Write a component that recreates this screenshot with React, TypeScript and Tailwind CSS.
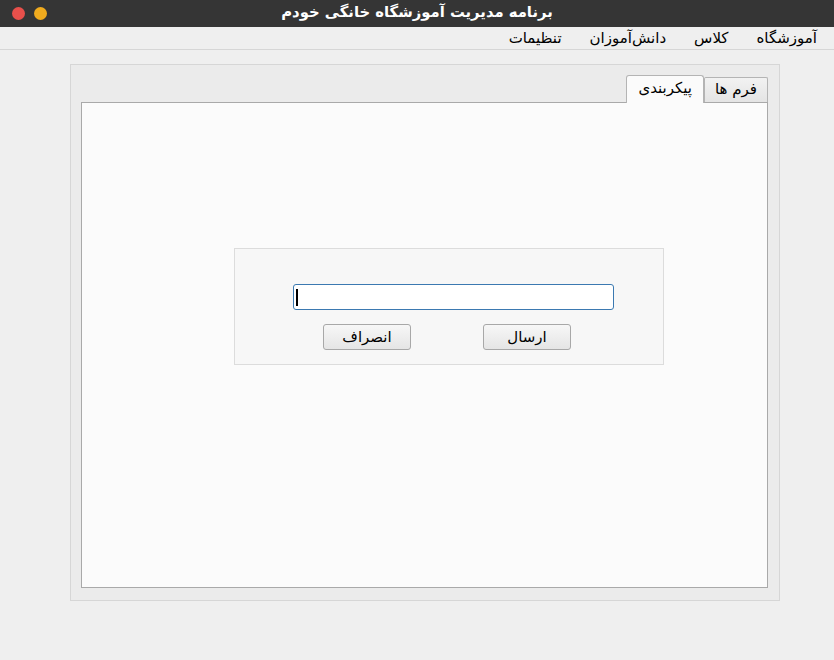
import React from "react";

export default function App() {
  const font = { fontFamily: '"DejaVu Sans", "Noto Sans", sans-serif' };
  return (
    <div className="w-[834px] h-[660px] bg-[#efefef] flex flex-col overflow-hidden" style={font}>
      {/* Title bar */}
      <div className="h-[27px] bg-[#353535] flex items-center shrink-0">
        <div className="w-[56px] flex items-center gap-[9px] pl-[12px]">
          <div className="w-[13px] h-[13px] rounded-full bg-[#e8504b]" />
          <div className="w-[13px] h-[13px] rounded-full bg-[#f0ab1e]" />
        </div>
        <div className="flex-1 text-center text-white font-bold text-[14.8px] leading-none pb-[3px]" dir="rtl">
          برنامه مدیریت آموزشگاه خانگی خودم
        </div>
        <div className="w-[56px]" />
      </div>
      {/* Menu bar */}
      <div className="h-[23px] bg-[#efefef] border-b border-[#d6d6d6] flex items-center pr-[3px] shrink-0" dir="rtl">
        {["آموزشگاه", "کلاس", "دانش‌آموزان", "تنظیمات"].map((m) => (
          <div key={m} className="px-[14px] text-[15px] text-black leading-none pt-[1px]">
            {m}
          </div>
        ))}
      </div>
      {/* Group box */}
      <div className="ml-[70px] mt-[14px] w-[710px] h-[537px] bg-[#ebebeb] border border-[#d6d6d6] flex flex-col pl-[10px] pr-[11px] pt-[9px] pb-[12px]">
        {/* Tabs */}
        <div className="flex justify-start items-end h-[28px] shrink-0" dir="rtl">
          <div className="h-[25px] px-[10px] flex items-center bg-gradient-to-b from-[#f2f2f2] to-[#e4e4e4] border border-[#b4b4b4] border-b-0 rounded-t-[2px] text-[15px] text-black pb-[1px]">
            فرم ها
          </div>
          <div className="h-[28px] px-[11px] flex items-center bg-[#fbfbfb] border border-[#b4b4b4] border-b-0 rounded-t-[3px] text-[15px] text-black relative top-[1px] z-10 pb-[2px]">
            پیکربندی
          </div>
        </div>
        {/* Pane */}
        <div className="flex-1 bg-[#fbfbfb] border border-[#a9a9a9] pl-[152px] pt-[145px]">
          <div className="w-[430px] h-[117px] bg-[#f7f7f7] border border-[#dcdcdc] flex flex-col pt-[35px]">
            <div className="ml-[58px] w-[321px] h-[26px] bg-white border border-[#3b79b1] rounded-[3px] flex items-center pl-[2px]">
              <div className="w-[1.5px] h-[17px] bg-black" />
            </div>
            <div className="flex mt-[14px]">
              <button className="ml-[88px] w-[88px] h-[26px] bg-gradient-to-b from-[#f7f7f7] to-[#e5e5e5] border border-[#a8a8a8] rounded-[3px] text-[15px] text-black flex items-center justify-center" style={font}>
                انصراف
              </button>
              <button className="ml-[72px] w-[88px] h-[26px] bg-gradient-to-b from-[#f7f7f7] to-[#e5e5e5] border border-[#a8a8a8] rounded-[3px] text-[15px] text-black flex items-center justify-center" style={font}>
                ارسال
              </button>
            </div>
          </div>
        </div>
      </div>
    </div>
  );
}
